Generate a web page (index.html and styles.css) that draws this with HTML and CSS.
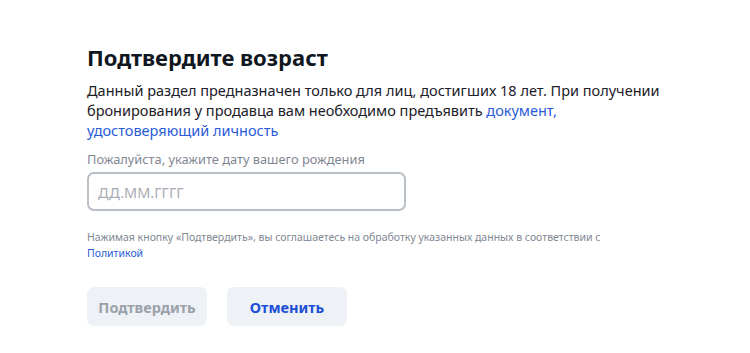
FILE: index.html
```html
<!DOCTYPE html>
<html lang="ru">
<head>
    <meta charset="UTF-8">
    <meta name="viewport" content="width=device-width, initial-scale=1.0">
    <title>Подтвердите возраст</title>
    <link rel="stylesheet" href="styles.css">
</head>
<body>
    <div class="age-check">
        <h1>Подтвердите возраст</h1>
        <p class="intro">
            Данный раздел предназначен только для лиц, достигших 18 лет. При получении<br>
            бронирования у продавца вам необходимо предъявить <a href="#">документ,<br>
            удостоверяющий личность</a>
        </p>
        <label class="field-label" for="birthDate">Пожалуйста, укажите дату вашего рождения</label>
        <input class="date-input" id="birthDate" type="text" placeholder="ДД.ММ.ГГГГ">
        <p class="note">
            Нажимая кнопку «Подтвердить», вы соглашаетесь на обработку указанных данных в соответствии с<br>
            <a href="#">Политикой</a>
        </p>
        <div class="buttons">
            <button class="btn btn-confirm" disabled>Подтвердить</button>
            <button class="btn btn-cancel">Отменить</button>
        </div>
    </div>
</body>
</html>
```

FILE: styles.css
```css
body {
    margin: 0;
    background: #fff;
    font-family: "Noto Sans", Arial, sans-serif;
    color: #1b2029;
}

.age-check {
    padding: 40px 87px 0;
    width: 600px;
}

h1 {
    font-size: 22px;
    font-weight: 700;
    margin: 0 0 6px;
    line-height: 34px;
    color: #101720;
}

.intro {
    font-size: 14.5px;
    line-height: 20px;
    margin: 0 0 10px;
}

a {
    color: #2a5bd7;
    text-decoration: none;
}

.field-label {
    display: block;
    font-size: 12.8px;
    line-height: 18px;
    color: #7f8792;
    margin-bottom: 4px;
}

.date-input {
    display: block;
    box-sizing: border-box;
    width: 319px;
    height: 39px;
    border: 2px solid #b9bfc7;
    border-radius: 7px;
    padding: 0 9px;
    font-family: inherit;
    font-size: 14.5px;
    outline: none;
}

.date-input::placeholder {
    color: #a6acb4;
}

.note {
    font-size: 10.5px;
    line-height: 16px;
    color: #808893;
    margin: 18px 0 26px;
}

.buttons {
    display: flex;
    gap: 20px;
}

.btn {
    width: 120px;
    height: 39px;
    border: none;
    border-radius: 7px;
    background: #eef1f5;
    font-family: inherit;
    font-size: 14.5px;
    font-weight: 700;
    cursor: pointer;
}

.btn-confirm {
    color: #9ba1a9;
    cursor: default;
}

.btn-cancel {
    color: #1c4ed8;
}
```
